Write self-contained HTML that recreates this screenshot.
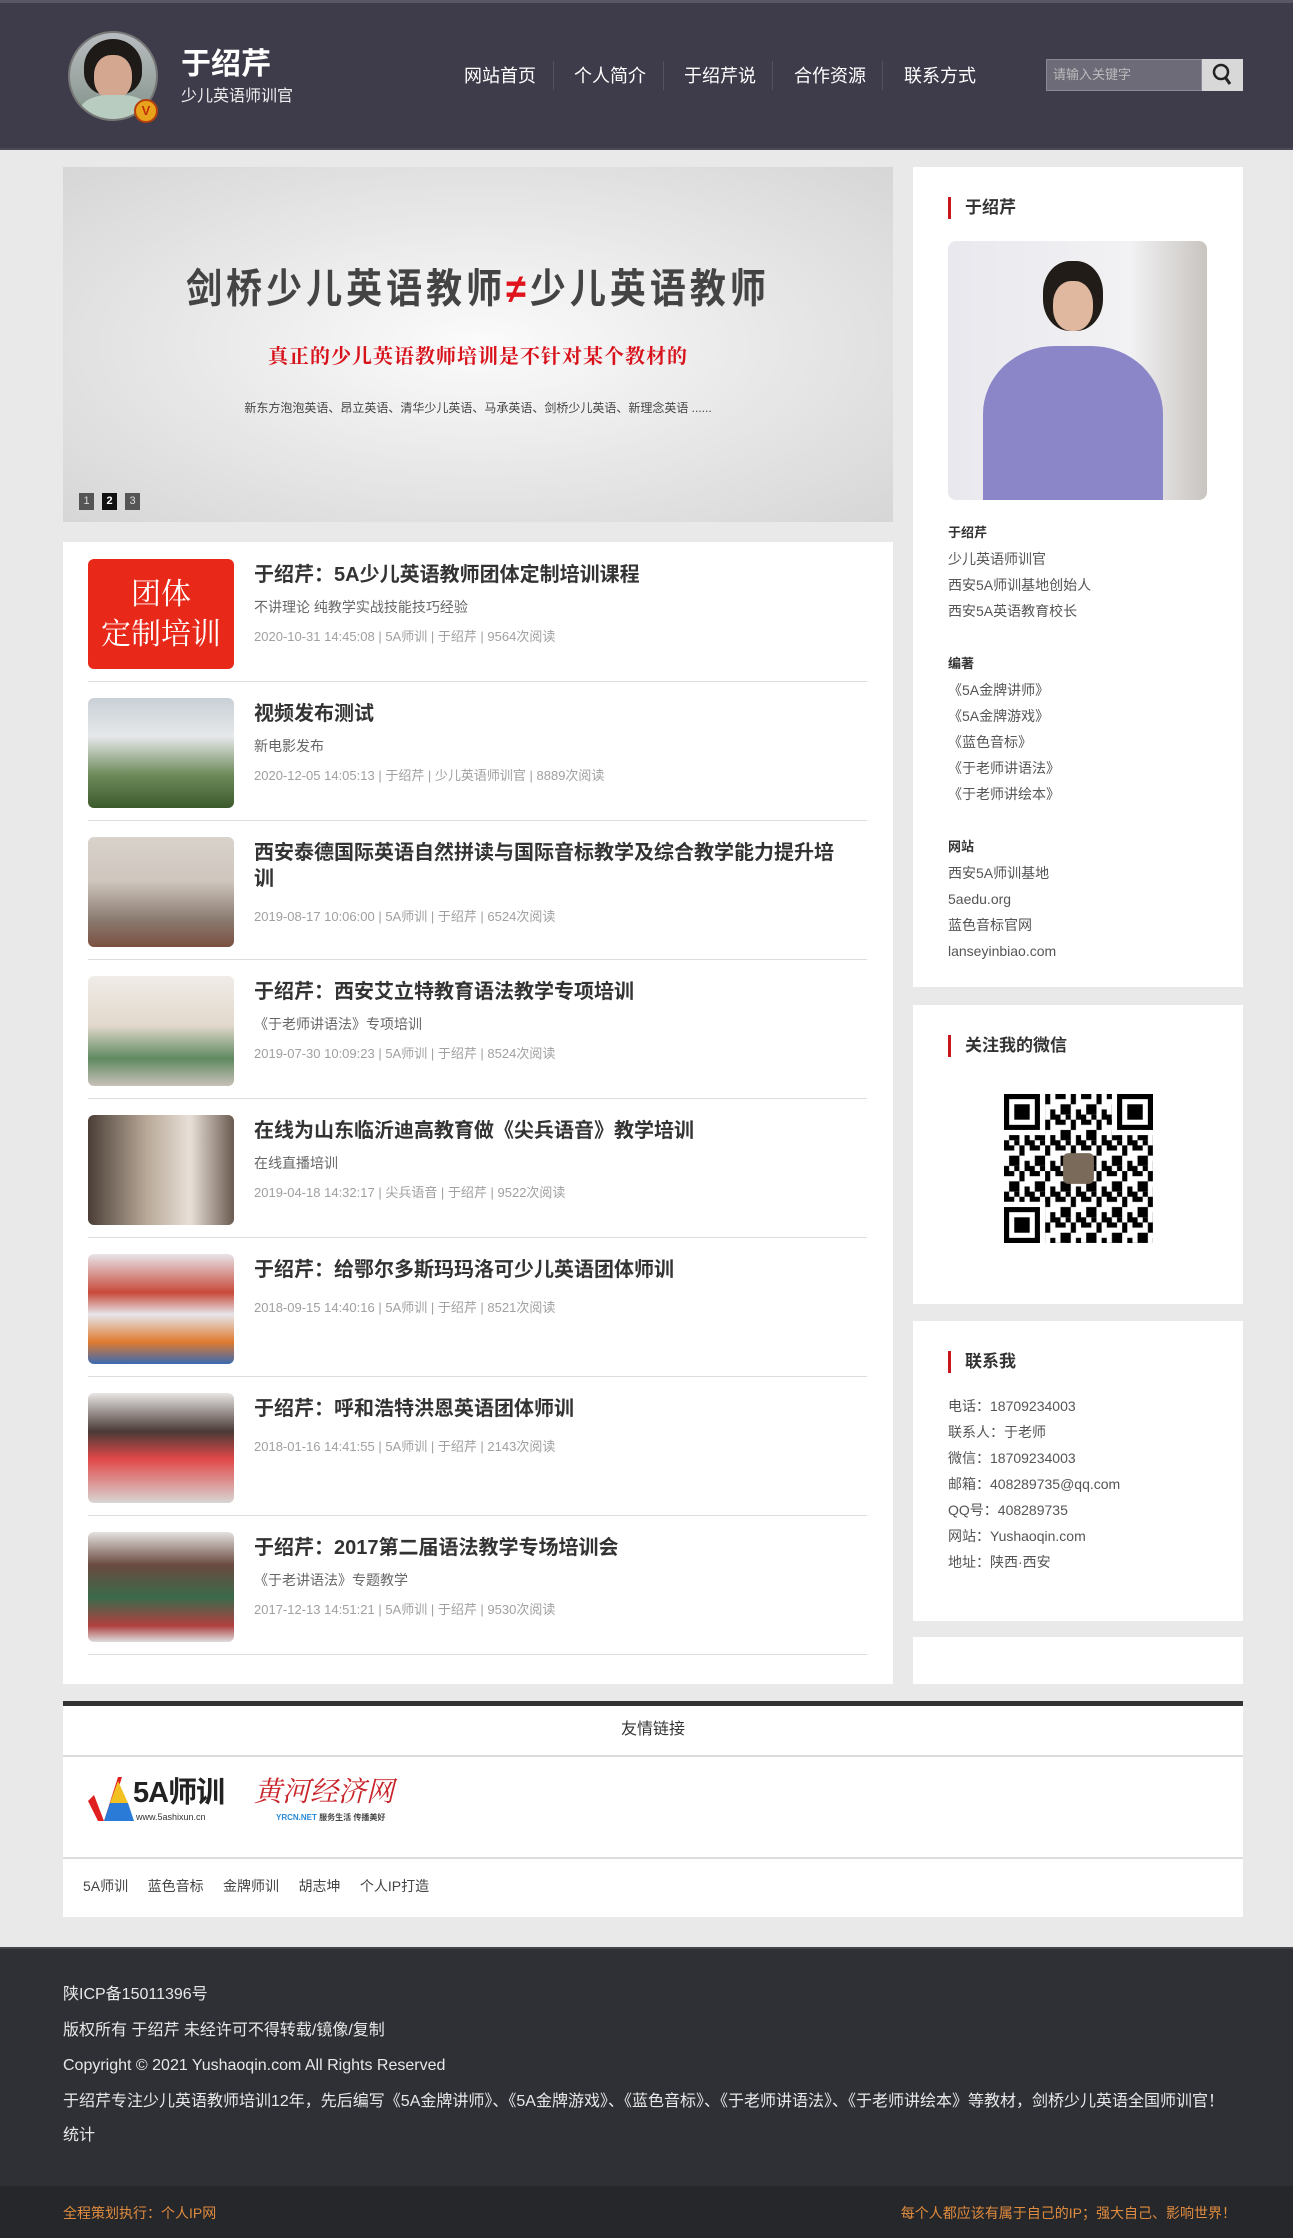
<!DOCTYPE html>
<html><head><meta charset="utf-8">
<style>
*{margin:0;padding:0;box-sizing:border-box}
body{width:1293px;height:2238px;background:#e9e9e9;font-family:"Liberation Sans","Noto Sans CJK SC",sans-serif;position:relative;overflow:hidden;color:#333}
.abs{position:absolute}
#hdr{left:0;top:0;width:1293px;height:150px;background:#3e3c4a;border-top:3px solid #5a5666;border-bottom:2px solid #4d4a58}
.nav{top:64px;font-size:18px;color:#fff;line-height:24px}
.sep{top:61px;width:1px;height:29px;background:#2a2833;border-right:1px solid #55525f}
.box{background:#fff}
.item{position:absolute;left:88px;width:779px;height:139px}
.item .im{position:absolute;left:0;top:0;width:146px;height:110px;border-radius:6px;overflow:hidden}
.item .tx{position:absolute;left:166px;top:3px;width:600px}
.item h3{font-size:20px;line-height:26px;font-weight:bold;color:#333}
.item .d{font-size:14px;color:#666;line-height:22px;margin-top:8px}
.item .m{font-size:13px;color:#a0a0a0;line-height:20px;margin-top:9px}
.item .m2{margin-top:15px}
.item .ln{position:absolute;left:0;top:122px;width:779px;height:1px;background:#ddd}
.rt{left:913px;width:330px}
.rh{position:absolute;left:35px;font-size:17px;font-weight:bold;color:#333;padding-left:14px;border-left:3px solid #c8161d;line-height:22px}
.rl{position:absolute;left:35px;font-size:14px;color:#555;line-height:26px}
.rl b{color:#333;font-size:13px}
.ft{left:63px;font-size:16px;color:#e8e8e8;line-height:20px}
</style></head><body>

<div id="hdr" class="abs"></div>
<div class="abs" style="left:68px;top:31px;width:90px;height:90px;border-radius:50%;overflow:hidden;background:linear-gradient(180deg,#b8bcc0 0%,#9aa4a0 60%,#7e9088 100%);border:2px solid #777">
<div class="abs" style="left:14px;top:6px;width:58px;height:56px;border-radius:50% 50% 40% 40%;background:#1e1a18"></div>
<div class="abs" style="left:24px;top:22px;width:38px;height:44px;border-radius:45%;background:#d4a890"></div>
<div class="abs" style="left:10px;top:62px;width:70px;height:40px;border-radius:40%;background:#b8ccc0"></div>
</div>
<div class="abs" style="left:134px;top:99px;width:24px;height:24px;border-radius:50%;background:#e9a21b;border:2px solid #b5400d;color:#c0300a;font-size:13px;font-weight:bold;text-align:center;line-height:20px">V</div>
<div class="abs" style="left:181px;top:46px;font-size:30px;font-weight:bold;color:#fff;line-height:38px">于绍芹</div>
<div class="abs" style="left:181px;top:86px;font-size:16px;color:#eee;line-height:22px">少儿英语师训官</div>

<div class="abs nav" style="left:464px">网站首页</div>
<div class="abs sep" style="left:553px"></div>
<div class="abs nav" style="left:574px">个人简介</div>
<div class="abs sep" style="left:663px"></div>
<div class="abs nav" style="left:684px">于绍芹说</div>
<div class="abs sep" style="left:772px"></div>
<div class="abs nav" style="left:794px">合作资源</div>
<div class="abs sep" style="left:882px"></div>
<div class="abs nav" style="left:904px">联系方式</div>

<div class="abs" style="left:1046px;top:59px;width:156px;height:32px;background:#6d6b78;border:1px solid #8a8894;font-size:13px;color:#bbb;line-height:30px;padding-left:6px">请输入关键字</div>
<div class="abs" style="left:1202px;top:59px;width:41px;height:32px;background:#d8d8d8">
<svg width="41" height="32"><circle cx="19" cy="13" r="7" fill="none" stroke="#222" stroke-width="2.5"/><line x1="23" y1="18" x2="28" y2="25" stroke="#222" stroke-width="3"/></svg></div>

<!-- banner -->
<div class="abs" style="left:63px;top:167px;width:830px;height:355px;background:radial-gradient(ellipse at 50% 50%,#fbfbfb 0%,#e6e6e6 55%,#d6d6d6 100%)"></div>
<div class="abs" style="left:63px;top:264px;width:830px;text-align:center;font-size:36px;font-weight:bold;color:#444;letter-spacing:4px;line-height:50px;transform:scaleY(1.12)">剑桥少儿英语教师<span style="color:#e0141c">≠</span>少儿英语教师</div>
<div class="abs" style="left:63px;top:340px;width:830px;text-align:center;font-family:'Noto Serif CJK SC',serif;font-size:20px;font-weight:bold;color:#d8121b;line-height:30px;letter-spacing:1px">真正的少儿英语教师培训是不针对某个教材的</div>
<div class="abs" style="left:63px;top:400px;width:830px;text-align:center;font-size:12px;color:#444;line-height:16px">新东方泡泡英语、昂立英语、清华少儿英语、马承英语、剑桥少儿英语、新理念英语 ......</div>
<div class="abs" style="left:79px;top:493px;width:15px;height:17px;background:#555;color:#ddd;font-size:11px;text-align:center;line-height:17px">1</div>
<div class="abs" style="left:102px;top:493px;width:15px;height:17px;background:#111;color:#fff;font-size:11px;text-align:center;line-height:17px;font-weight:bold">2</div>
<div class="abs" style="left:125px;top:493px;width:15px;height:17px;background:#555;color:#ddd;font-size:11px;text-align:center;line-height:17px">3</div>

<!-- list -->
<div class="abs box" style="left:63px;top:542px;width:830px;height:1142px"></div>

<div class="item" style="top:559px"><div class="im" style="background:#e8291a;color:#fff;font-family:'Noto Serif CJK SC',serif;font-size:30px;line-height:40px;text-align:center;padding-top:12px">团体<br>定制培训</div>
<div class="tx"><h3>于绍芹：5A少儿英语教师团体定制培训课程</h3><div class="d">不讲理论 纯教学实战技能技巧经验</div><div class="m">2020-10-31 14:45:08 | 5A师训 | 于绍芹 | 9564次阅读</div></div><div class="ln"></div></div>

<div class="item" style="top:698px"><div class="im" style="background:linear-gradient(180deg,#c9d0d6 0%,#e6e8ea 35%,#6d8a5a 70%,#3b5a2c 100%)"></div>
<div class="tx"><h3>视频发布测试</h3><div class="d">新电影发布</div><div class="m">2020-12-05 14:05:13 | 于绍芹 | 少儿英语师训官 | 8889次阅读</div></div><div class="ln"></div></div>

<div class="item" style="top:837px"><div class="im" style="background:linear-gradient(180deg,#d8d2cc 0%,#cfc6bd 40%,#8b7b70 75%,#7a5040 100%)"></div>
<div class="tx"><h3>西安泰德国际英语自然拼读与国际音标教学及综合教学能力提升培<br>训</h3><div class="m m2">2019-08-17 10:06:00 | 5A师训 | 于绍芹 | 6524次阅读</div></div><div class="ln"></div></div>

<div class="item" style="top:976px"><div class="im" style="background:linear-gradient(180deg,#f0ece8 0%,#e2d8cc 45%,#5f8a60 75%,#c8c0b8 100%)"></div>
<div class="tx"><h3>于绍芹：西安艾立特教育语法教学专项培训</h3><div class="d">《于老师讲语法》专项培训</div><div class="m">2019-07-30 10:09:23 | 5A师训 | 于绍芹 | 8524次阅读</div></div><div class="ln"></div></div>

<div class="item" style="top:1115px"><div class="im" style="background:linear-gradient(90deg,#4a3e36 0%,#b8a898 40%,#e8e0d8 70%,#6a5a50 100%)"></div>
<div class="tx"><h3>在线为山东临沂迪高教育做《尖兵语音》教学培训</h3><div class="d">在线直播培训</div><div class="m">2019-04-18 14:32:17 | 尖兵语音 | 于绍芹 | 9522次阅读</div></div><div class="ln"></div></div>

<div class="item" style="top:1254px"><div class="im" style="background:linear-gradient(180deg,#e8e4ea 0%,#c84a3a 35%,#e6e6ea 55%,#e07a30 80%,#3a6ab0 100%)"></div>
<div class="tx"><h3>于绍芹：给鄂尔多斯玛玛洛可少儿英语团体师训</h3><div class="m m2">2018-09-15 14:40:16 | 5A师训 | 于绍芹 | 8521次阅读</div></div><div class="ln"></div></div>

<div class="item" style="top:1393px"><div class="im" style="background:linear-gradient(180deg,#e8e6e4 0%,#4a3a36 35%,#e04848 60%,#d8d6d4 100%)"></div>
<div class="tx"><h3>于绍芹：呼和浩特洪恩英语团体师训</h3><div class="m m2">2018-01-16 14:41:55 | 5A师训 | 于绍芹 | 2143次阅读</div></div><div class="ln"></div></div>

<div class="item" style="top:1532px"><div class="im" style="background:linear-gradient(180deg,#e4e2e0 0%,#6a4a40 30%,#3a6a4a 60%,#b04040 85%,#ddd 100%)"></div>
<div class="tx"><h3>于绍芹：2017第二届语法教学专场培训会</h3><div class="d">《于老讲语法》专题教学</div><div class="m">2017-12-13 14:51:21 | 5A师训 | 于绍芹 | 9530次阅读</div></div><div class="ln"></div></div>

<!-- right 1 -->
<div class="abs box rt" style="top:167px;height:820px">
<div class="rh" style="top:30px">于绍芹</div>
<div class="abs" style="left:35px;top:74px;width:259px;height:259px;border-radius:8px;overflow:hidden;background:linear-gradient(90deg,#e8e8ee 0%,#f2f2f4 70%,#c8c4c0 100%)">
<div class="abs" style="left:95px;top:20px;width:60px;height:70px;border-radius:45%;background:#221c18"></div>
<div class="abs" style="left:105px;top:40px;width:40px;height:50px;border-radius:45%;background:#e0b8a0"></div>
<div class="abs" style="left:35px;top:105px;width:180px;height:170px;border-radius:40% 40% 0 0;background:#8a86c8"></div>
</div>
<div class="rl" style="top:352px"><b>于绍芹</b><br>少儿英语师训官<br>西安5A师训基地创始人<br>西安5A英语教育校长<br><br><b>编著</b><br>《5A金牌讲师》<br>《5A金牌游戏》<br>《蓝色音标》<br>《于老师讲语法》<br>《于老师讲绘本》<br><br><b>网站</b><br>西安5A师训基地<br>5aedu.org<br>蓝色音标官网<br>lanseyinbiao.com</div>
</div>

<!-- right 2 -->
<div class="abs box rt" style="top:1005px;height:299px">
<div class="rh" style="top:30px">关注我的微信</div>
<svg class="abs" style="left:91px;top:89px" width="149" height="149" viewBox="0 0 29 29">
<defs><pattern id="p" width="5" height="5" patternUnits="userSpaceOnUse"><rect width="5" height="5" fill="#fff"/><rect x="0" y="0" width="2" height="1" fill="#000"/><rect x="3" y="0" width="1" height="2" fill="#000"/><rect x="1" y="2" width="2" height="2" fill="#000"/><rect x="4" y="3" width="1" height="2" fill="#000"/><rect x="0" y="4" width="1" height="1" fill="#000"/><rect x="2" y="4" width="1" height="1" fill="#000"/></pattern></defs>
<rect width="29" height="29" fill="url(#p)"/>
<g fill="#000"><rect x="0" y="0" width="7" height="7"/><rect x="22" y="0" width="7" height="7"/><rect x="0" y="22" width="7" height="7"/></g>
<g fill="#fff"><rect x="1" y="1" width="5" height="5"/><rect x="23" y="1" width="5" height="5"/><rect x="1" y="23" width="5" height="5"/><rect x="7" y="0" width="1" height="8"/><rect x="0" y="7" width="8" height="1"/><rect x="21" y="0" width="1" height="8"/><rect x="21" y="7" width="8" height="1"/><rect x="0" y="21" width="8" height="1"/><rect x="7" y="21" width="1" height="8"/></g>
<g fill="#000"><rect x="2" y="2" width="3" height="3"/><rect x="24" y="2" width="3" height="3"/><rect x="2" y="24" width="3" height="3"/></g>
<rect x="11.5" y="11.5" width="6" height="6" rx="1" fill="#7a6a5a"/>
</svg>
</div>

<!-- right 3 -->
<div class="abs box rt" style="top:1321px;height:300px">
<div class="rh" style="top:30px">联系我</div>
<div class="rl" style="top:72px">电话：18709234003<br>联系人：于老师<br>微信：18709234003<br>邮箱：408289735@qq.com<br>QQ号：408289735<br>网站：Yushaoqin.com<br>地址：陕西·西安</div>
</div>
<div class="abs box rt" style="top:1637px;height:47px"></div>

<!-- friends -->
<div class="abs box" style="left:63px;top:1701px;width:1180px;height:216px;border-top:5px solid #333"></div>
<div class="abs" style="left:63px;top:1719px;width:1180px;text-align:center;font-size:16px;color:#333;line-height:22px">友情链接</div>
<div class="abs" style="left:63px;top:1755px;width:1180px;height:2px;background:#ddd"></div>
<svg class="abs" style="left:88px;top:1773px" width="48" height="52"><polygon points="6,22 16,48 10,48 0,28" fill="#e02020"/><polygon points="16,48 30,4 34,4 20,48" fill="#e02020"/><polygon points="22,30 40,30 46,48 16,48" fill="#2a7ad8"/><polygon points="30,8 40,30 22,30" fill="#f2c020"/></svg>
<div class="abs" style="left:133px;top:1775px;font-size:29px;font-weight:bold;color:#222;line-height:36px;letter-spacing:-1px">5A师训</div>
<div class="abs" style="left:136px;top:1812px;font-size:9px;color:#333">www.5ashixun.cn</div>
<div class="abs" style="left:254px;top:1772px;font-family:'Noto Serif CJK SC',serif;font-style:italic;font-size:28px;color:#c8242a;line-height:36px">黄河经济网</div>
<div class="abs" style="left:276px;top:1812px;font-size:8px;color:#2a8ad8;font-weight:bold">YRCN.NET <span style="color:#444">服务生活 传播美好</span></div>
<div class="abs" style="left:63px;top:1857px;width:1180px;height:2px;background:#ddd"></div>
<div class="abs" style="left:83px;top:1877px;font-size:14px;color:#444;line-height:18px">5A师训&nbsp;&nbsp;&nbsp;&nbsp;&nbsp;蓝色音标&nbsp;&nbsp;&nbsp;&nbsp;&nbsp;金牌师训&nbsp;&nbsp;&nbsp;&nbsp;&nbsp;胡志坤&nbsp;&nbsp;&nbsp;&nbsp;&nbsp;个人IP打造</div>

<!-- footer -->
<div class="abs" style="left:0;top:1947px;width:1293px;height:239px;background:#2e3035;border-top:2px solid #44464c"></div>
<div class="abs ft" style="top:1985px">陕ICP备15011396号</div>
<div class="abs ft" style="top:2021px">版权所有 于绍芹 未经许可不得转载/镜像/复制</div>
<div class="abs ft" style="top:2056px">Copyright © 2021 Yushaoqin.com All Rights Reserved</div>
<div class="abs ft" style="top:2092px">于绍芹专注少儿英语教师培训12年，先后编写《5A金牌讲师》、《5A金牌游戏》、《蓝色音标》、《于老师讲语法》、《于老师讲绘本》等教材，剑桥少儿英语全国师训官！</div>
<div class="abs ft" style="top:2126px">统计</div>
<div class="abs" style="left:0;top:2186px;width:1293px;height:52px;background:#25272b"></div>
<div class="abs" style="left:63px;top:2203px;font-size:14px;color:#e08b3d;line-height:20px">全程策划执行：个人IP网</div>
<div class="abs" style="right:57px;top:2203px;font-size:14px;color:#e08b3d;line-height:20px">每个人都应该有属于自己的IP；强大自己、影响世界！</div>
</body></html>
